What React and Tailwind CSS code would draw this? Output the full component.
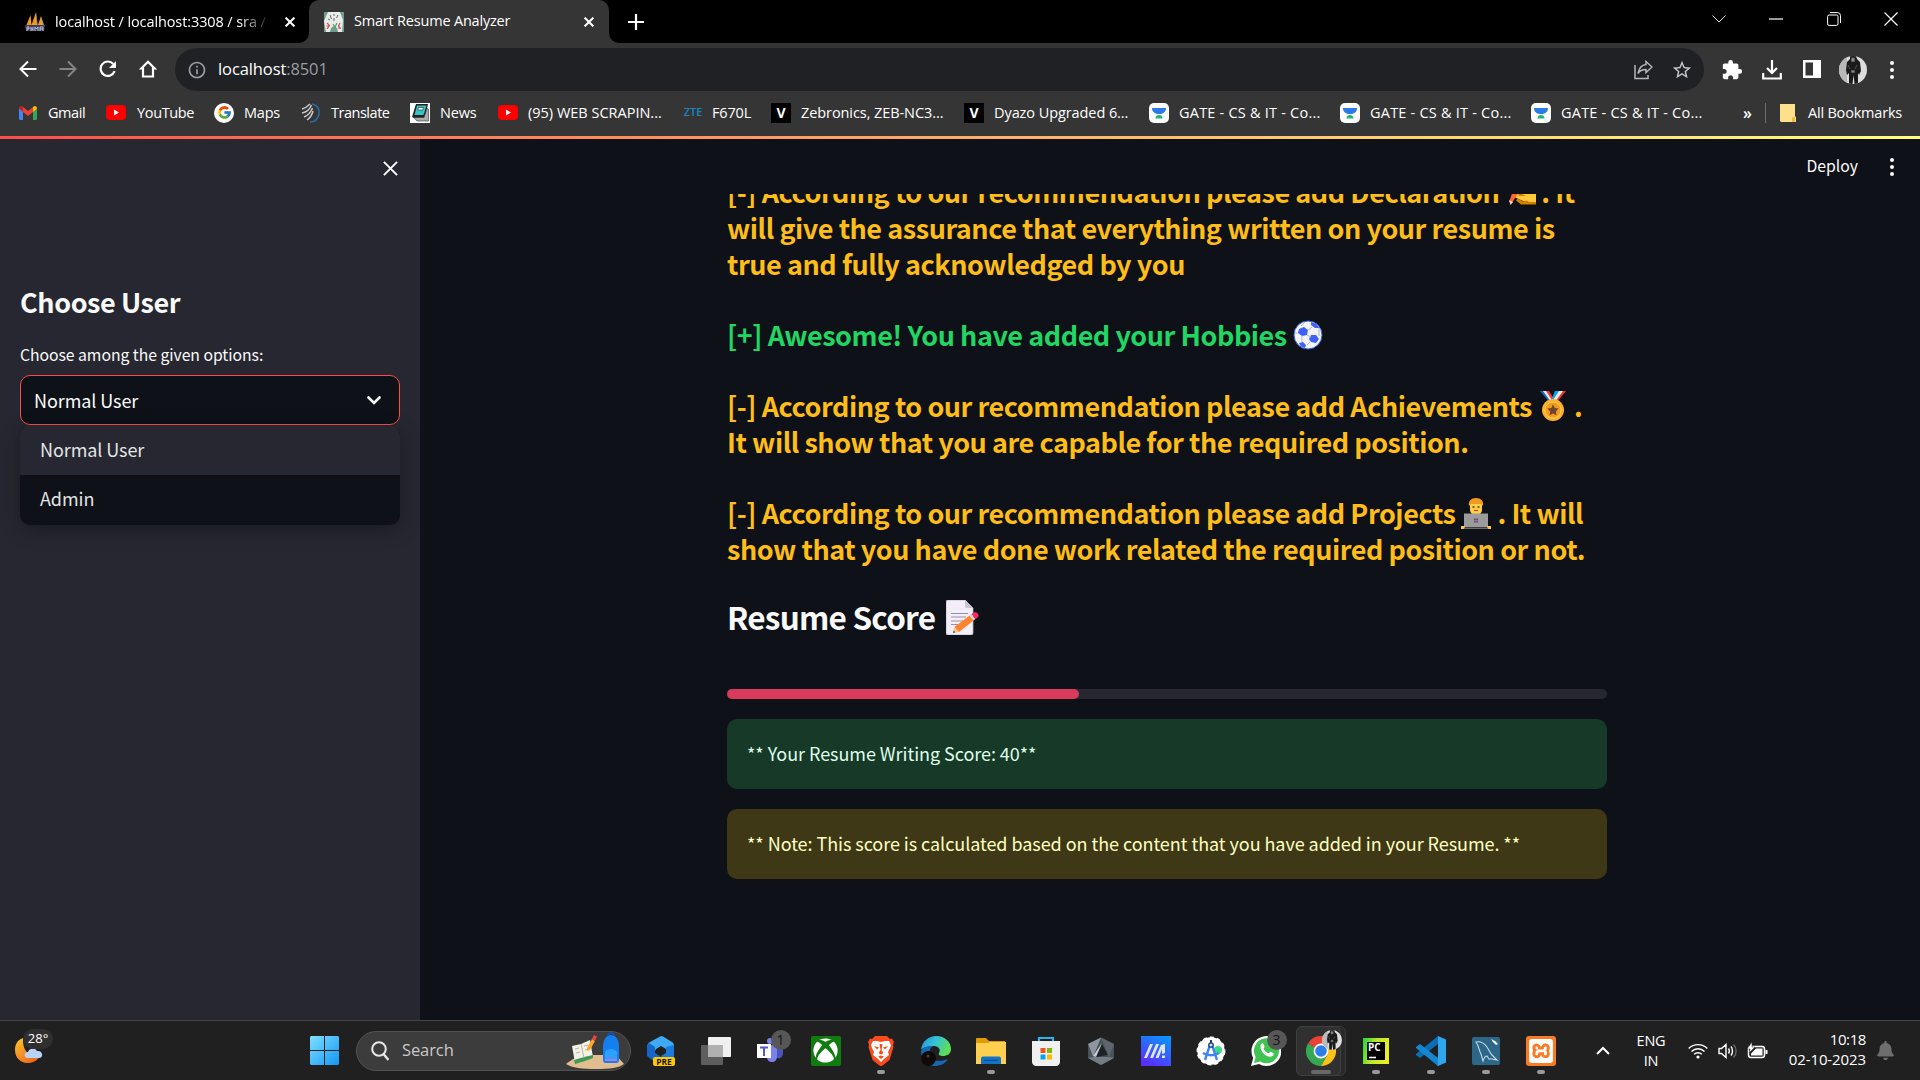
import { FcGoogle } from "react-icons/fc";
import { FaXbox, FaBell } from "react-icons/fa";
import { MdExtension, MdStarBorder, MdInfoOutline } from "react-icons/md";
import { SiXampp } from "react-icons/si";

function T({ className = "", children }) {
  return <span className={"inline-block whitespace-nowrap " + className}>{children}</span>;
}

/* ---------- Browser chrome ---------- */

function Sails() {
  return (
    <svg viewBox="0 0 20 20" className="size-5">
      <path d="M5.500 3 1.500 13h5zM11 0 6.500 13h5.500zM16 4l-3 9h5z" fill="#f39a1e" />
      <path d="M11 0l1.800 13h-1.300zM16 4l3 9h-2z" fill="#c2a16a" />
      <path d="M0 13h20l-1 6H1z" fill="#3c4163" />
      <path d="M2 19v-4h2v2H2m4 2v-4m0 2h2m0-2v4m2 0v-4l1.500 2 1.500-2v4m2 0v-4h3v4m-3-2h3" stroke="#c8cbe0" fill="none" strokeWidth=".9" />
    </svg>
  );
}

function ResumeFavicon() {
  return (
    <svg viewBox="0 0 20 20" className="size-5">
      <path fill="#6f9c8c" d="M0 0h20v20H0z" />
      <path d="M4 0h12l3 8-1 12h-4l-1-4-3-2-3 2-1 4H2L0 9z" fill="#e9ecea" />
      <path d="M6 3l1.500 4M14 3l-1.500 3M10 2v2M10 6v3" stroke="#666" strokeWidth="1" />
      <path d="M3 11l2.500 2.500L3 17M16 11l-1.500 3 2 3M2.500 14h3M14 16h3" stroke="#e0475a" strokeWidth="1.200" fill="none" />
      <path d="M9 12l2 3 2-4M4 7l2 1" stroke="#4aa55e" strokeWidth="1.200" fill="none" />
    </svg>
  );
}

function X({ s = 10, w = 2 }) {
  return (
    <svg width={s} height={s} viewBox="0 0 10 10" className="shrink-0">
      <path d="M.6.6l8.800 8.800M9.400.6.6 9.400" stroke="#fff" strokeWidth={w} />
    </svg>
  );
}

function TabStrip() {
  return (
    <header className="flex h-[43px] items-stretch bg-black text-white">
      <div className="flex w-[309px] items-center pl-[25px]">
        <Sails />
        <div className="ml-[10px] w-[216px] overflow-hidden mask-r-from-85% mask-r-to-100% pb-px">
          <T className="text-[14.500px] tracking-[-0.1px]">localhost / localhost:3308 / sra /</T>
        </div>
        <div className="ml-[14px]"><X /></div>
      </div>
      <div className="relative flex w-[300px] items-center rounded-t-[10px] bg-[#353535] pl-[15px]">
        <svg className="absolute bottom-0 -left-[10px]" width="10" height="10"><path d="M10 0v10H0A10 10 0 0 0 10 0" fill="#353535" /></svg>
        <svg className="absolute -right-[10px] bottom-0" width="10" height="10"><path d="M0 0v10h10A10 10 0 0 1 0 0" fill="#353535" /></svg>
        <ResumeFavicon />
        <T className="ml-[10px] pb-px text-[14.500px] tracking-[-0.2px]">Smart Resume Analyzer</T>
        <div className="mr-[15px] ml-auto"><X /></div>
      </div>
      <div className="flex items-center pl-[19px]">
        <svg width="16" height="16"><path d="M8 0v16M0 8h16" stroke="#fff" strokeWidth="2.200" /></svg>
      </div>
      <div className="mr-[22px] ml-auto flex h-[37px] items-center">
        <svg width="14" height="8"><path d="M.5.5 7 7 13.500.5" stroke="#ddd" fill="none" /></svg>
        <svg width="14" height="2" className="ml-[43px]"><path d="M0 1h14" stroke="#fff" strokeWidth="1.200" /></svg>
        <svg width="14" height="14" className="ml-[44px]" fill="none" stroke="#fff"><rect x=".6" y="3" width="10.400" height="10.400" rx="1.500" /><path d="M3 .6h7.500a3 3 0 0 1 3 3V11" /></svg>
        <svg width="14" height="14" className="ml-[43px]"><path d="M.5.5l13 13M13.500.5l-13 13" stroke="#fff" strokeWidth="1.200" /></svg>
      </div>
    </header>
  );
}

function Dots() {
  return (
    <svg width="6" height="20" fill="#fafafa"><circle cx="3" cy="3" r="2" /><circle cx="3" cy="10" r="2" /><circle cx="3" cy="17" r="2" /></svg>
  );
}

function Avatar({ size }) {
  return (
    <svg width={size} height={size} viewBox="0 0 28 28" className="rounded-full">
      <path fill="#dedede" d="M0 0h28v28H0z" />
      <path d="M0 0h8v28H0z" fill="#b9b9b9" />
      <path d="M11 0h6l1 3 3 3 1 9-2 4-1-2 0 11h-3.500l-1-9-1 9H10V17l-2 2-1-5 1-8 3-3z" fill="#1b1b1b" />
      <path d="M12.500 2h3v3.500h-3zM9 9l2 4M18 9l-2 4M12.500 14.500h3v2h-3z" fill="#8a8a8a" stroke="#6a6a6a" strokeWidth=".7" />
    </svg>
  );
}

function Toolbar() {
  return (
    <div className="flex h-[53px] items-center bg-[#353535] pl-[19px]">
      <svg width="18" height="18" className="mb-px" fill="none" stroke="#fff" strokeWidth="2"><path d="M17.500 9H2M9 1.500 1.500 9 9 16.500" /></svg>
      <svg width="18" height="18" className="mb-px ml-[22px]" fill="none" stroke="#858585" strokeWidth="2"><path d="M.5 9H16M9 1.500 16.500 9 9 16.500" /></svg>
      <svg width="18" height="18" className="mb-px ml-[22px]" viewBox="0 0 18 18"><path d="M15.600 11.200A7.200 7.200 0 1 1 14.300 4" fill="none" stroke="#fff" strokeWidth="2.200" /><path d="M17 1v7h-7z" fill="#fff" /></svg>
      <svg width="18" height="18" className="mb-px ml-[22px]" fill="none" stroke="#fff" strokeWidth="2.200"><path d="M9 1.800 2.300 8.500H4v8h10v-8h1.700z" /></svg>
      <div className="ml-[18px] flex h-[43px] w-[1529px] items-center rounded-full bg-[#202124] pl-[12px]">
        <MdInfoOutline className="size-5 text-[#9aa0a6]" />
        <T className="ml-[11px] text-[16.500px] tracking-[-0.1px] text-white">localhost<span className="text-[#9a9da1]">:8501</span></T>
        <svg width="19" height="20" className="mr-[18px] ml-auto" fill="none" stroke="#b4b6b9" strokeWidth="1.500"><path d="M1 5v13.500h13V15" /><path d="M12 1.500 18 7l-6 5.500V9.500c-4 0-6.500 1.500-8 4C5 8 7.500 5 12 4.500z" /></svg>
        <MdStarBorder className="mr-[11px] size-[22px] text-[#c4c6c9]" />
      </div>
      <MdExtension className="ml-[17px] size-[22px] text-white" />
      <svg width="20" height="20" className="ml-[19px]" fill="none" stroke="#fff" strokeWidth="2.200"><path d="M10 0v12M5 8l5 5 5-5M1.200 13v5.500h17.600V13" /></svg>
      <svg width="18" height="18" className="mb-px ml-[21px]"><path d="M0 0h18v18H0z" fill="#fff" /><path d="M2.500 2.500h7.500v13H2.500z" fill="#353535" /></svg>
      <div className="ml-[18px]"><Avatar size={28} /></div>
      <div className="ml-[22px]"><Dots /></div>
    </div>
  );
}

function GmailIcon() {
  return (
    <svg width="18" height="14" viewBox="0 0 18 14">
      <path d="M0 2v10.500A1.500 1.500 0 0 0 1.500 14H4V5z" fill="#4285f4" />
      <path d="M18 2v10.500a1.500 1.500 0 0 1-1.500 1.500H14V5z" fill="#34a853" />
      <path d="M4 6v-5l5 4 5-4v5L9 10z" fill="#ea4335" />
      <path d="M14 1c2-2 4-.5 4 1.500L14 6z" fill="#fbbc04" />
      <path d="M4 1C2-1 0 .5 0 2.500L4 6z" fill="#c5221f" />
    </svg>
  );
}
function YT() {
  return (
    <svg width="20" height="15" viewBox="0 0 20 15"><rect width="20" height="15" rx="4" fill="#f00" /><path d="M8 4.500v6l5-3z" fill="#fff" /></svg>
  );
}
function TranslateIcon() {
  return (
    <svg width="20" height="20" viewBox="0 0 20 20" fill="none">
      <path d="M1 6C5 5 7 3 9 1M1 10c5-1 8-4 9.500-8M3 14c5-2 7-5 8.500-9M6 17c3-2 5-5 6-9" stroke="#c9c9c9" strokeWidth="1.500" />
      <path d="M11 1c5 1 8 5 7 10s-4 8-9 8" stroke="#2a6ca8" strokeWidth="1.500" />
    </svg>
  );
}
function NewsIcon() {
  return (
    <svg width="20" height="20" viewBox="0 0 20 20"><path fill="#fff" d="M0 0h20v20H0z" /><path d="M2 14 6 1h12l-3 14H4z" fill="#222" /><path d="M7 2.500h9.500L13.500 12H4.500z" fill="#35c4c8" /><path d="M8.500 4.500h5l-.7 2.500H7.800z" fill="#fff" stroke="#222" strokeWidth=".6" /><path d="M4 14.500h10l3-9 1.500 1V18H7z" fill="#aaa" stroke="#333" strokeWidth=".6" /></svg>
  );
}
function VIcon() {
  return <div className="flex size-5 items-center justify-center bg-black text-[14px] font-bold text-white">V</div>;
}
function Unacademy() {
  return (
    <svg width="20" height="20" viewBox="0 0 20 20"><rect width="20" height="20" rx="5" fill="#fff" /><path d="M3 5h14c0 4-3 6-7 6S3 9 3 5z" fill="#2c7be8" /><path d="M6.500 15.500c0-2.500 1.500-3.500 3.500-3.500s3.500 1 3.500 3.500z" fill="#1fb574" /></svg>
  );
}

function Bookmark({ width, text, icon, children }) {
  return (
    <div className={"flex shrink-0 items-center " + width}>
      <span className="flex w-5 shrink-0 justify-center">{icon}</span>
      <T className={"text-[14.500px] " + text}>{children}</T>
    </div>
  );
}

function Bookmarks() {
  return (
    <nav className="flex h-[40px] items-center bg-[#353535] pb-[7px] pl-[18px] text-white">
      <Bookmark width="w-[88px]" text="ml-[10px] tracking-[-0.45px]" icon={<GmailIcon />}>Gmail</Bookmark>
      <Bookmark width="w-[108px]" text="ml-[11px] tracking-[-0.35px]" icon={<YT />}>YouTube</Bookmark>
      <Bookmark width="w-[87px]" text="ml-[10px] tracking-[-0.2px]" icon={<span className="flex size-5 items-center justify-center rounded-full bg-white"><FcGoogle className="size-[15px]" /></span>}>Maps</Bookmark>
      <Bookmark width="w-[109px]" text="ml-[10px] tracking-[-0.48px]" icon={<TranslateIcon />}>Translate</Bookmark>
      <Bookmark width="w-[88px]" text="ml-[10px] tracking-[-0.2px]" icon={<NewsIcon />}>News</Bookmark>
      <Bookmark width="w-[185px]" text="ml-[10px]" icon={<YT />}>(95) WEB SCRAPIN...</Bookmark>
      <Bookmark width="w-[88px]" text="ml-[9px] tracking-[-0.15px]" icon={<span className="text-[11px] font-semibold text-[#1687c4]">ZTE</span>}>F670L</Bookmark>
      <Bookmark width="w-[193px]" text="ml-[10px] tracking-[-0.08px]" icon={<VIcon />}>Zebronics, ZEB-NC3...</Bookmark>
      <Bookmark width="w-[185px]" text="ml-[10px] tracking-[-0.08px]" icon={<VIcon />}>Dyazo Upgraded 6...</Bookmark>
      <Bookmark width="w-[191px]" text="ml-[10px] tracking-[0.22px]" icon={<Unacademy />}>GATE - CS &amp; IT - Co...</Bookmark>
      <Bookmark width="w-[191px]" text="ml-[10px] tracking-[0.22px]" icon={<Unacademy />}>GATE - CS &amp; IT - Co...</Bookmark>
      <Bookmark width="w-[212px]" text="ml-[10px] tracking-[0.22px]" icon={<Unacademy />}>GATE - CS &amp; IT - Co...</Bookmark>
      <span className="w-[22px] text-[16px] font-semibold">»</span>
      <span className="h-5 w-px bg-[#6b6b6b]" />
      <svg width="16" height="18" className="ml-[14px]" viewBox="0 0 16 18"><path d="M0 0h15v12l1 1v5H1l-1-1z" fill="#ffe08a" /><path d="M12 18v-4l3-2v6z" fill="#e8bd48" /></svg>
      <T className="ml-[12px] text-[14.500px] tracking-[-0.2px]">All Bookmarks</T>
    </nav>
  );
}

/* ---------- Emoji drawings ---------- */

function WritingHand() {
  return (
    <svg width="30" height="30" viewBox="0 0 30 30">
      <path d="M3 12l7-8h14l6 3v18l-9 1-4-2-9-4z" fill="#ffc83d" />
      <path d="M30 25v2.500H15l-5-4 2-2 5 3 4-1 2 1.500z" fill="#d67d00" />
      <path d="M3 25 8 11l6 2-8 13z" fill="#ff6723" />
      <path d="M3 23l4 2-2.500 3z" fill="#f5d5c0" />
      <path d="M11 15l9 4-7 0z" fill="#d67d00" />
    </svg>
  );
}
function Ball() {
  return (
    <svg width="30" height="30" viewBox="0 0 30 30">
      <circle cx="15" cy="15" r="14" fill="#f3f3f8" stroke="#2f62e0" strokeWidth="1" />
      <path d="M6 9l5-2 4 3-1 5-5 1-4-3zM18 15l5 0 3 4-3 4-5-1-2-3zM18 2c4 1 7 3 8 6l-4 0-4-3zM6 23l4-1 3 3-1 3c-3-.5-5-2-6-5z" fill="#4060f8" />
      <path d="M1.500 13l3 0M15 10l4-3M14 15l4 2M9 16v6M26 8v8M17 22l-3 3M12 2 8 6" stroke="#b5b5c4" strokeWidth="1" />
    </svg>
  );
}
function Medal() {
  return (
    <svg width="26" height="30" viewBox="0 0 26 30">
      <path d="M0 0h7l8 10-5 2z" fill="#0f6cbd" /><path d="M3 0h5l6 9-3 2z" fill="#e8e8f0" /><path d="M6 0h3l5 8-2 1z" fill="#f8312f" />
      <path d="M26 0h-7L11 10l5 2z" fill="#f8312f" /><path d="M23 0h-5l-6 9 3 2z" fill="#e8e8f0" /><path d="M19 0h-4l-3 7 1 2z" fill="#00a6ed" />
      <circle cx="13" cy="19" r="11" fill="#ffb02e" /><circle cx="13" cy="19" r="8" fill="#f59b1c" stroke="#ffd15a" />
      <path d="m13 13.500 1.800 3.400 3.700.7-2.600 2.800.5 3.800-3.400-1.700-3.400 1.700.5-3.800-2.600-2.800 3.700-.7z" fill="#6d4534" />
    </svg>
  );
}
function Technologist() {
  return (
    <svg width="30" height="31" viewBox="0 0 30 31">
      <path d="M9 6c0-3 3-5 6-5s6 2 6 5v6c0 3-3 5-6 5s-6-2-6-5z" fill="#ffcf48" />
      <path d="M8 8C7 3 10 0 15 0s8 3 7 8l-2-2H10z" fill="#f19a22" />
      <path d="M11.500 9h2M16.500 9h2" stroke="#4a3a2c" strokeWidth="1.300" /><path d="M13 12.500h4" stroke="#d0402f" strokeWidth="1.200" />
      <path d="M3 15.500h24V29H3z" fill="#9b9b9b" /><path d="M0 28h4v3H0zM26 28h4v3h-4z" fill="#ffc83d" /><path d="M3 29.500h24V31H3z" fill="#6d6d6d" />
      <path d="M13 20.500h4v4h-4z" fill="#5c4a72" /><path d="M15 20.500v4M13 22.500h4" stroke="#9b9b9b" strokeWidth=".6" />
    </svg>
  );
}
function Memo() {
  return (
    <svg width="33" height="35" viewBox="0 0 33 35">
      <path d="M2 0h17l8 8v25a2 2 0 0 1-2 2H2a2 2 0 0 1-2-2V2a2 2 0 0 1 2-2z" fill="#f3eef8" stroke="#b9aec6" strokeWidth=".8" />
      <path d="M19 0l8 8h-6a2 2 0 0 1-2-2z" fill="#cdc4d6" />
      <path d="M5 13.500h17M5 17h15M5 21h12M5 24.500h7" stroke="#9b8fa8" strokeWidth="1.200" />
      <path d="m7 33 1.500-6 5 5z" fill="#f9c98c" /><path d="m7 33 .8-2.500 1.600 1.700z" fill="#4a3a44" />
      <path d="m8.500 27 15-11.500 4 5L13 32z" fill="#ff822d" />
      <path d="m23.500 15.500 2-1.500 4 5-2 1.500z" fill="#d3d3d3" /><path d="m25.500 14 2-1.300c2-1 3.500-.3 4.500 1.300s.5 2.700-.7 3.700L29.500 19z" fill="#fa2a5c" />
    </svg>
  );
}

/* ---------- Page ---------- */

function Sidebar() {
  return (
    <aside className="flex w-[420px] flex-col bg-[#262730] px-5 text-[#fafafa]">
      <div className="mt-[22px] mr-[2px] self-end"><X s={15} w={1.300} /></div>
      <T className="mt-[108px] self-start text-[27px] leading-[36px] font-bold tracking-[-0.42px]">Choose User</T>
      <T className="mt-[21px] self-start text-[15.750px] leading-[28px] tracking-[-0.04px]">Choose among the given options:</T>
      <div className="relative mt-[6px] flex h-[50px] items-center justify-between rounded-[10px] border border-[#ff4b4b] bg-[#0e1117] pr-[18px] pl-[13px]">
        <T className="text-[18px] tracking-[-0.08px]">Normal User</T>
        <svg width="14" height="9" fill="none" stroke="#fafafa" strokeWidth="2.600"><path d="M1.500 1.500 7 7l5.500-5.500" strokeLinecap="round" /></svg>
        <ul className="absolute top-[49px] -right-px -left-px overflow-hidden rounded-[10px] bg-[#0e1117] text-[18px] tracking-[-0.08px] text-[#e3e4e6] shadow-[0_5px_20px_rgba(0,0,0,0.3)]">
          <li className="flex h-[50px] items-center bg-[#262730] pb-[2px] pl-5"><T>Normal User</T></li>
          <li className="flex h-[50px] items-center pb-[3px] pl-5"><T>Admin</T></li>
        </ul>
      </div>
    </aside>
  );
}

function Line({ children }) {
  return <div className="flex h-[36px] items-center leading-[36px] whitespace-nowrap">{children}</div>;
}

function Main() {
  return (
    <main className="flex flex-1 flex-col bg-[#0e1117]">
      <div className="flex h-[55px] items-center justify-end pr-[25px] text-[#fafafa]">
        <T className="mr-[31px] pb-px text-[15.750px]">Deploy</T>
        <Dots />
      </div>
      <div className="flex-1 overflow-hidden">
        <div className="-mt-[20px] ml-[307px] flex w-[880px] flex-col text-[27px] font-bold tracking-[-0.45px] text-[#ffbd17]">
          <Line><T>[-] According to our recommendation please add Declaration</T><span className="ml-[7px]"><WritingHand /></span><T className="ml-[5px]">. It</T></Line>
          <Line><T>will give the assurance that everything written on your resume is</T></Line>
          <Line><T>true and fully acknowledged by you</T></Line>
          <div className="mt-[35px] text-[#21d663]">
            <Line><T>[+] Awesome! You have added your Hobbies</T><span className="ml-[6px]"><Ball /></span></Line>
          </div>
          <div className="mt-[35px]">
            <Line><T>[-] According to our recommendation please add Achievements</T><span className="ml-[8px]"><Medal /></span><T className="ml-[8px]">.</T></Line>
            <Line><T>It will show that you are capable for the required position.</T></Line>
          </div>
          <div className="mt-[35px]">
            <Line><T>[-] According to our recommendation please add Projects</T><span className="ml-[6px]"><Technologist /></span><T className="ml-[6px]">. It will</T></Line>
            <Line><T>show that you have done work related the required position or not.</T></Line>
          </div>
          <h3 className="mt-[29px] flex h-[42px] items-center text-[31.500px] tracking-[-0.78px] text-[#fafafa]"><T>Resume Score</T><span className="ml-[11px]"><Memo /></span></h3>
          <div className="mt-[51px] h-[10px] rounded-full bg-[#262730]"><div className="h-full w-2/5 rounded-full bg-[#d83b5b]" /></div>
          <div className="mt-5 flex h-[70px] items-center rounded-[10px] bg-[#173928] pl-5 text-[18px] font-normal tracking-[-0.055px] text-[#dffde9]"><T className="pb-px">** Your Resume Writing Score: 40**</T></div>
          <div className="mt-5 flex h-[70px] items-center rounded-[10px] bg-[#3e3816] pl-5 text-[18px] font-normal tracking-[-0.055px] text-[#ffffc2]"><T className="pb-px">** Note: This score is calculated based on the content that you have added in your Resume. **</T></div>
        </div>
      </div>
    </main>
  );
}

/* ---------- Taskbar ---------- */

function Weather() {
  return (
    <div className="relative mt-[8px] ml-[15px] h-[38px] w-[40px]">
      <svg width="30" height="27" viewBox="0 0 30 27" className="absolute top-[8px] left-0">
        <defs><linearGradient id="moon" x1="0" y1="0" x2=".6" y2="1"><stop stopColor="#fcc62f" /><stop offset="1" stopColor="#ee6f1c" /></linearGradient></defs>
        <path d="M8 1C2 3 0 8 0 13c0 8 6 13 12 13 5 0 10-2 12-6-9 1-17-6-16-19z" fill="url(#moon)" />
        <path d="M13 21c-5 0-4-6 0-6 1-4 7-5 9-1 6-1 7 7 2 7z" fill="#b9d3f7" />
      </svg>
      <div className="absolute top-0 left-[8px] flex h-[20px] w-[30px] items-center justify-center rounded-full bg-[#2f2f2f] text-[13px] text-white">28°</div>
    </div>
  );
}
function Start() {
  return (
    <svg width="29" height="29" viewBox="0 0 29 29">
      <defs><linearGradient id="win" x1="0" y1="0" x2="1" y2="1"><stop stopColor="#7fe0ff" /><stop offset="1" stopColor="#1296f5" /></linearGradient></defs>
      <path fill="url(#win)" d="M1 0h13v14H0V1zM15 0h13l1 1v13H15zM0 15h14v14H1l-1-1zM15 15h14v13l-1 1H15z" />
    </svg>
  );
}
function SearchArt() {
  return (
    <svg width="58" height="38" viewBox="0 0 58 38">
      <path d="M0 32c6-5 12-8 20-9h30l8 9c-5 4-14 5-28 5S6 36 0 32z" fill="#e2bd90" />
      <path d="M6 14l9-2 9-4 3 17-9 2-9 4z" fill="#f4f1e6" /><path d="m8 28 1 4 10-3 8-3v-3l-9 2z" fill="#3f9a56" /><path d="m15 12 3 14M9 17l4-1M10 21l4-1M18 14l4-1M19 18l4-1" stroke="#b9b4a4" />
      <path d="M21 16 26 7l3 2-5 9-3 1z" fill="#ffa52a" /><path d="m26 7 2-4 3 1.500-2 4z" fill="#f0443e" />
      <path d="M37 15c0-7 3-12 8-12s8 5 8 12v13c0 2-1 3-3 3H40c-2 0-3-1-3-3z" fill="#1480f0" /><path d="M42 4c0-4 6-4 6 0" fill="none" stroke="#0c55b8" strokeWidth="1.500" />
      <path d="M39 20c2-4 10-4 12 0v8H39z" fill="#2ea0ff" /><path d="M39 27h12v2H39z" fill="#b877e8" />
    </svg>
  );
}

function M365() {
  return (
    <svg width="30" height="30" viewBox="0 0 30 30" className="ml-[2px]">
      <path d="M14 0 3 6C1 7 0 9 0 11l8 4 1-2 5-3 5 3 8 1v-3c0-2 0-4-2-5L16 .5z" fill="#3fa9f5" />
      <path d="M0 10v10l8 6 5-2v-4l-5-3V11L2 7z" fill="#1467c8" />
      <path d="M27 9v13l-8 4-5-2v-4l5-3v-6z" fill="#1b7bdc" />
      <rect x="6" y="21" width="22" height="9" rx="2" fill="#ffc60a" />
      <text x="17" y="28.500" textAnchor="middle" fontSize="8.500" fontWeight="700" fill="#1a1a1a" fontFamily="Open Sans">PRE</text>
    </svg>
  );
}
function TaskView() {
  return (
    <svg width="30" height="30" viewBox="0 0 30 30"><rect y="9" width="22" height="20" rx="1" fill="#5e5e5e" /><rect x="7" y="1" width="23" height="20" rx="1" fill="#f0f0f0" /><path d="M7 9h15v12H7z" fill="#b0b0b0" /></svg>
  );
}
function Badge({ at, children }) {
  return <span className={"absolute -top-[6px] flex size-5 items-center justify-center rounded-full bg-[#575757] text-[14px] leading-none text-[#151515] " + at}>{children}</span>;
}
function Teams() {
  return (
    <div className="relative size-[30px]">
      <svg width="30" height="30" viewBox="0 0 30 30">
        <path d="M18 9h9v8c0 4-3 6-6 5z" fill="#4b53bc" /><path d="M10 9h11v11c0 4-2 6-5 6s-5-2-5-5z" fill="#7b83eb" /><circle cx="14" cy="5" r="3" fill="#7b83eb" />
        <rect x="1" y="8" width="14" height="14" fill="#fff" /><path d="M4 11.500h8M8 12v8" stroke="#5059c9" strokeWidth="2" />
      </svg>
      <Badge at="left-[15px]">1</Badge>
    </div>
  );
}
function Xbox() {
  return <div className="flex size-[30px] items-center justify-center rounded-[2px] bg-[#107c10]"><FaXbox className="size-[25px] text-white" /></div>;
}
function Brave() {
  return (
    <svg width="26" height="30" viewBox="0 0 26 30">
      <path d="M7 0h12l3 3 2-.5L26 6l-1 3 .5 2-4 13-7 5.500q-1.500 1-3 0l-7-5.500L.5 11 1 9 0 6l2-3.500L4 3z" fill="#fb4b1c" />
      <path d="M5 5h4l4 1 4-1h4l2 4-1 3-2 4 1 3-5 4-3 3-3-3-5-4 1-3-2-4-1-3z" fill="#fff" />
      <path d="M6 10l5 1.500-2 2zM20 10l-5 1.500 2 2zM11.500 8h3l-1 6 2 3-2.500 1.500L10.500 17l2-3zM10 20.500l3-1 3 1-3 2.500z" fill="#fb4b1c" />
    </svg>
  );
}
function Edge() {
  return (
    <svg width="30" height="30" viewBox="0 0 30 30">
      <defs><linearGradient id="edge" x1="0" y1="0" x2="1" y2=".4"><stop stopColor="#1c8fd8" /><stop offset=".5" stopColor="#33c3d8" /><stop offset="1" stopColor="#5fdc5a" /></linearGradient></defs>
      <path d="M0 14C1 5 8 0 15 0c9 0 15 6 15 13 0 5-4 7-8 7-3 0-5-1-4-3 2-3 0-7-5-7C7 10 1 12 0 14z" fill="url(#edge)" />
      <path d="M0 15c2-4 7-5 12-5-3 2-4 5-3 9 1 5 7 8 18 4-3 5-8 7-13 7C6 30 0 23 0 15z" fill="#1767b5" />
      <circle cx="7.500" cy="22.500" r="7.500" fill="#0d0a0a" /><circle cx="7" cy="20" r="1.500" fill="#5b3527" />
    </svg>
  );
}
function Folder() {
  return (
    <svg width="30" height="30" viewBox="0 0 30 30"><path d="M0 3c0-.6.4-1 1-1h9l3 3h16v6H0z" fill="#e09b0c" /><path d="M0 7h12l2-1h16v22H0z" fill="#ffd04f" /><path d="M5 28v-5c0-2 1-2.500 3-2.500h14c2 0 3 .5 3 2.500v5z" fill="#1273c8" /><path d="M8 24.300h14" stroke="#0a4a88" /></svg>
  );
}
function Store() {
  return (
    <svg width="30" height="30" viewBox="0 0 30 30"><path d="M8 6V2h14v4" fill="none" stroke="#2cb4ee" strokeWidth="2.200" /><path d="M1 5h28v21c0 2-2 4-4 4H5c-2 0-4-2-4-4z" fill="#f0f0f0" /><path d="M9.500 12h5v5h-5z" fill="#f25022" /><path d="M16 12h5v5h-5z" fill="#7fba00" /><path d="M9.500 18.500h5v5h-5z" fill="#00a4ef" /><path d="M16 18.500h5v5h-5z" fill="#ffb900" /></svg>
  );
}
function Hex() {
  return (
    <svg width="30" height="30" viewBox="0 0 30 30"><path d="M15 1.500 28 8v14l-13 7L2 22V8z" fill="#4b535a" /><path d="M15 1.500 2 8l5 13z" fill="#8d969e" /><path d="M2 8v14l5-1z" fill="#4a5259" /><path d="M15 1.500 28 8l-5 13z" fill="#5d666e" /><path d="M2 22 7 21h16l5 1-13 7z" fill="#737b83" /><path d="M16 8l6 11-12 2z" fill="#1d2226" /><path d="M16 7 7 20l3 1z" fill="#c3cad0" /></svg>
  );
}
function MIcon() {
  return (
    <svg width="30" height="30" viewBox="0 0 30 30"><defs><linearGradient id="mg" x1=".3" y1="1" x2=".8" y2="0"><stop stopColor="#5b2cff" /><stop offset="1" stopColor="#0a95ff" /></linearGradient></defs><path fill="url(#mg)" d="M0 0h30v30H0z" /><path d="M3 22 9 8h3L6 22zM9 22l6-14h3l-6 14zM14.500 22 20 9l4-1v9l-3 1v-5l-3.500 9zM21 19.500h3V22h-3z" fill="#dfe6ff" /></svg>
  );
}
function AndroidStudio() {
  return (
    <svg width="30" height="30" viewBox="0 0 30 30"><circle cx="15" cy="15" r="13.700" fill="#fff" /><circle cx="15" cy="15" r="13.700" fill="none" stroke="#fff" strokeWidth="1.500" strokeDasharray="4 3" /><circle cx="22" cy="14" r="4" fill="#3ddc84" /><path d="m14 9-5 15M16 9l5 15M7 17c4 3 12 3 16 0" stroke="#4285f4" strokeWidth="2.400" fill="none" /><circle cx="15" cy="9" r="2.200" fill="#cfe0ff" stroke="#1d3c66" strokeWidth="1.300" /><path d="M15 4v3" stroke="#1d3c66" strokeWidth="2" /></svg>
  );
}
function WhatsApp() {
  return (
    <div className="relative size-[30px]">
      <svg width="30" height="30" viewBox="0 0 30 30"><path d="M0 30l2.200-8A15 15 0 1 1 8 28z" fill="#fff" /><path d="M3 27l1.600-6A12.500 12.500 0 1 1 9 25.500z" fill="#40c351" /><path d="M10 8c1-1 2-1 2.500 0l1 2.500c.2.600-1.200 1.700-1 2.200 1 2 2.700 3.600 5 4.500.6.200 1.500-1.700 2.200-1.400l2.500 1.300c.8.400.4 2.200-.8 3C17 23 7 15 10 8z" fill="#fff" /></svg>
      <Badge at="left-[16px]">3</Badge>
    </div>
  );
}
function Chrome() {
  return (
    <div className="relative size-[30px]">
      <svg width="30" height="30" viewBox="0 0 30 30"><path d="M15 15 2 7.500A15 15 0 0 1 28 7.500H15z" fill="#ea4335" /><path d="M15 15 2 7.500A15 15 0 0 0 15 30l6.500-11.200z" fill="#34a853" /><path d="M15 15l6.500 3.800L15 30A15 15 0 0 0 28 7.500H15z" fill="#fbc116" /><circle cx="15" cy="15" r="7.400" fill="#fff" /><circle cx="15" cy="15" r="5.800" fill="#2f7de9" /></svg>
      <div className="absolute -top-[6px] left-[16px]"><Avatar size={20} /></div>
    </div>
  );
}
function PyCharm() {
  return (
    <svg width="26" height="26" viewBox="0 0 26 26"><defs><linearGradient id="pc" x1="0" y1="0" x2="1" y2=".3"><stop stopColor="#21d73a" /><stop offset=".5" stopColor="#b5e52b" /><stop offset="1" stopColor="#e8ee20" /></linearGradient></defs><path fill="url(#pc)" d="M0 0h26v26H0z" /><path d="M4 4h18v18H4z" /><text x="5" y="13" fontSize="10" fontWeight="700" fill="#fff" fontFamily="Open Sans">PC</text><path d="M6 19.500h7" stroke="#fff" strokeWidth="1.600" /></svg>
  );
}
function VSCode() {
  return (
    <svg width="30" height="30" viewBox="0 0 30 30"><path d="M22 0v8L4 22l-4-3v-1z" fill="#0b6db5" /><path d="M0 11l4-3 18 14v8L0 12z" fill="#1387d0" /><path d="M22 0l8 3.500v23L22 30c-1 0 0-1 0-2z" fill="#2fa7f0" /></svg>
  );
}
function MySQL() {
  return (
    <svg width="28" height="28" viewBox="0 0 28 28"><rect width="28" height="28" rx="2" fill="#2c6688" /><path d="M4 5c4-1 8 1 11 5 2 3 3 6 5 8l5 5-5-1-3 0-2-3c-2 0-3 2-4 5l-2-7C7 14 7 9 4 5z" fill="none" stroke="#c7dbe5" strokeWidth="1.100" /><path d="m19 2 4 2 3 3-2 1-3-3z" fill="#fff" /></svg>
  );
}
function Xampp() {
  return <div className="flex size-[30px] items-center justify-center rounded-[3px] bg-[#fb7a24]"><SiXampp className="size-[24px] text-white" /></div>;
}

function Slot({ children, open, active }) {
  return (
    <div className="relative flex h-full w-[55px] shrink-0 items-center justify-center">
      {active && <><span className="absolute top-[5px] left-[4px] h-[50px] w-[49px] rounded-[6px] border border-[#3a3a3a] bg-[#292929]" /><span className="absolute top-[5px] left-[3px] h-[50px] w-[45px] rounded-[6px] border border-[#404040] bg-[#303030]" /></>}
      <span className="relative flex">{children}</span>
      {open && !active && <span className="absolute bottom-[6px] h-[4px] w-[8px] rounded-full bg-[#999]" />}
      {active && <span className="absolute bottom-[6px] h-[4px] w-[20px] rounded-full bg-[#696969]" />}
    </div>
  );
}

function Taskbar() {
  return (
    <footer className="flex h-[60px] items-center border-t border-[#454545] bg-[#202020] text-white">
      <div className="flex h-full w-[310px]"><Weather /></div>
      <Start />
      <div className="ml-[17px] flex h-[40px] w-[275px] items-center rounded-full border border-[#525252] bg-[#3c3c3c] pl-[14px]">
        <svg width="18" height="20" fill="none" stroke="#e8e8e8" strokeWidth="2"><circle cx="8" cy="8" r="6.800" /><path d="m12.500 13 5 6" strokeWidth="2.400" /></svg>
        <T className="ml-[13px] text-[16.500px] tracking-[-0.1px] text-[#c9c9c9]">Search</T>
        <span className="mr-[6px] ml-auto"><SearchArt /></span>
      </div>
      <div className="ml-[2px] flex h-full">
        <Slot><M365 /></Slot>
        <Slot><TaskView /></Slot>
        <Slot><Teams /></Slot>
        <Slot><Xbox /></Slot>
        <Slot open><Brave /></Slot>
        <Slot><Edge /></Slot>
        <Slot open><Folder /></Slot>
        <Slot><Store /></Slot>
        <Slot><Hex /></Slot>
        <Slot><MIcon /></Slot>
        <Slot><AndroidStudio /></Slot>
        <Slot><WhatsApp /></Slot>
        <Slot active><Chrome /></Slot>
        <Slot open><PyCharm /></Slot>
        <Slot open><VSCode /></Slot>
        <Slot open><MySQL /></Slot>
        <Slot open><Xampp /></Slot>
      </div>
      <svg width="14" height="9" className="ml-[28px]" fill="none" stroke="#fff" strokeWidth="2"><path d="m1 8 6-6 6 6" /></svg>
      <div className="ml-[26px] flex w-[30px] flex-col items-center text-[14.500px] leading-[20px] tracking-[-0.2px]"><T>ENG</T><T>IN</T></div>
      <svg width="20" height="16" className="ml-[22px]" viewBox="0 0 20 16" fill="none" stroke="#fff" strokeWidth="1.400"><path d="M.7 5.500a13 13 0 0 1 18.600 0M3.500 8.500a9 9 0 0 1 13 0M6.200 11.300a5.300 5.300 0 0 1 7.600 0" /><circle cx="10" cy="14" r="1.600" fill="#fff" stroke="none" /></svg>
      <svg width="20" height="16" className="ml-[10px]" viewBox="0 0 20 16" fill="none" stroke="#fff" strokeWidth="1.400"><path d="M1 5.500h2.500L8 1.500v13l-4.500-4H1zM10.500 5.500c1 1.500 1 3.500 0 5M13 3.500c2 2.500 2 6.500 0 9" /><path d="M15.500 1.500c3.500 3.500 3.500 9.500 0 13" stroke="#666" /></svg>
      <svg width="21" height="17" className="ml-[9px]" viewBox="0 0 21 17"><rect x="1.500" y="4.500" width="16" height="11" rx="2.500" fill="none" stroke="#fff" strokeWidth="1.500" /><path d="M9 6.500h6.500v7H4v-2z" fill="#fff" /><path d="M18.500 8h2v4h-2z" fill="#fff" /><path d="M5 0 0 7h3l-1 4 6-6H5z" fill="#fff" stroke="#202020" strokeWidth=".5" /></svg>
      <div className="ml-[20px] flex w-[78px] flex-col items-end pb-[4px] text-[15px] leading-[20px]"><T className="tracking-[-0.4px]">10:18</T><T className="tracking-[-0.1px]">02-10-2023</T></div>
      <FaBell className="ml-[10px] size-[19px] text-[#6e6e6e]" />
    </footer>
  );
}

export default function App() {
  return (
    <div className="flex h-[1080px] w-[1920px] flex-col overflow-hidden bg-[#0e1117] font-['Open_Sans',sans-serif]">
      <TabStrip />
      <Toolbar />
      <Bookmarks />
      <div className="h-[3px] bg-linear-to-r from-[#ff4b4b] to-[#fffd80]" />
      <div className="flex min-h-0 flex-1 font-['Noto_Sans_CJK_SC',sans-serif]">
        <Sidebar />
        <Main />
      </div>
      <Taskbar />
    </div>
  );
}
